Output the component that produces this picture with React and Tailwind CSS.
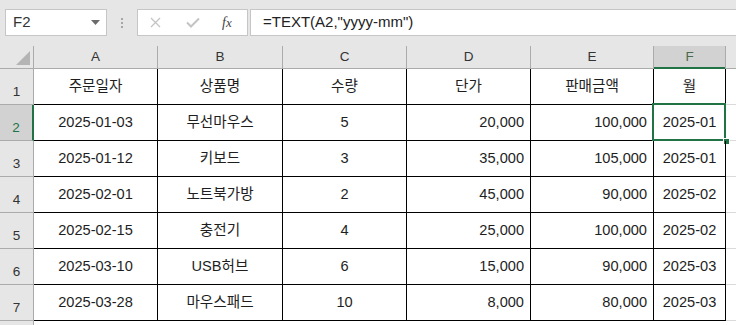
import React from "react";

const FONT = { fontFamily: '"Liberation Sans", "Noto Sans CJK KR", Arial, sans-serif' };

const cols = [
  { key: "A", w: "w-[124px]" },
  { key: "B", w: "w-[125px]" },
  { key: "C", w: "w-[124px]" },
  { key: "D", w: "w-[124px]" },
  { key: "E", w: "w-[123px]" },
  { key: "F", w: "w-[72px]" },
];

const rows = [
  ["주문일자", "상품명", "수량", "단가", "판매금액", "월"],
  ["2025-01-03", "무선마우스", "5", "20,000", "100,000", "2025-01"],
  ["2025-01-12", "키보드", "3", "35,000", "105,000", "2025-01"],
  ["2025-02-01", "노트북가방", "2", "45,000", "90,000", "2025-02"],
  ["2025-02-15", "충전기", "4", "25,000", "100,000", "2025-02"],
  ["2025-03-10", "USB허브", "6", "15,000", "90,000", "2025-03"],
  ["2025-03-28", "마우스패드", "10", "8,000", "80,000", "2025-03"],
];

function Cell({ w, children, align, selected }) {
  const a =
    align === "right" ? "justify-end pr-[6px]" : "justify-center";
  return (
    <div
      className={`relative ${w} h-[36px] shrink-0 border-r border-b border-black flex items-center ${a} text-[14.6px] text-[#1e1e1e]`}
    >
      {children}
      {selected && (
        <>
          <div className="absolute -left-[2px] -top-[2px] -right-[1px] -bottom-[1px] border-2 border-[#217346] pointer-events-none" />
          <div className="absolute -right-[4px] -bottom-[4px] w-[5px] h-[5px] bg-[#217346] outline outline-1 outline-white" />
        </>
      )}
    </div>
  );
}

export default function App() {
  return (
    <div className="w-[736px] h-[325px] overflow-hidden bg-white" style={FONT}>
      {/* Formula bar area */}
      <div className="h-[46px] bg-[#e6e6e6] flex items-start pt-[9px]">
        <div className="ml-[5px] w-[102px] h-[27px] bg-white border border-[#c6c6c6] flex items-center justify-between pl-[7px] pr-[6px]">
          <span className="text-[15px] text-[#333]">F2</span>
          <svg width="9" height="5" viewBox="0 0 9 5">
            <path d="M0 0 L9 0 L4.5 5 Z" fill="#6b6b6b" />
          </svg>
        </div>
        <div className="w-[30px] h-[27px] flex flex-col items-center justify-center gap-[2px]">
          <div className="w-[2px] h-[2px] bg-[#a6a6a6]" />
          <div className="w-[2px] h-[2px] bg-[#a6a6a6]" />
          <div className="w-[2px] h-[2px] bg-[#a6a6a6]" />
        </div>
        <div className="w-[111px] h-[27px] bg-white border border-[#c6c6c6] flex items-center">
          <svg className="ml-[12px]" width="11" height="11" viewBox="0 0 11 11">
            <path d="M1 1 L10 10 M10 1 L1 10" stroke="#c4c4c4" strokeWidth="1.3" />
          </svg>
          <svg className="ml-[25px]" width="14" height="11" viewBox="0 0 14 11">
            <path d="M1 5.5 L5 9.5 L13 1.5" stroke="#c4c4c4" strokeWidth="2" fill="none" />
          </svg>
          <span
            className="ml-[22px] text-[13px] italic text-[#444]"
            style={{ fontFamily: '"Liberation Serif", serif' }}
          >
            <span className="text-[14px]">f</span>x
          </span>
        </div>
        <div className="ml-[2px] flex-1 h-[27px] bg-white border border-[#c6c6c6] border-r-0 flex items-center pl-[12px]">
          <span className="text-[15px] text-[#222]">=TEXT(A2,"yyyy-mm")</span>
        </div>
      </div>

      {/* Column headers */}
      <div className="flex h-[23px] bg-[#e6e6e6] border-b border-[#ababab]">
        <div className="w-[34px] shrink-0 border-r border-[#ababab] relative">
          <svg className="absolute right-[3px] bottom-[3px]" width="14" height="14" viewBox="0 0 14 14">
            <path d="M14 0 L14 14 L0 14 Z" fill="#b4b4b4" />
          </svg>
        </div>
        {cols.map((c) => (
          <div
            key={c.key}
            className={`${c.w} shrink-0 border-r border-[#ababab] flex items-center justify-center text-[13.5px] relative ${
              c.key === "F" ? "bg-[#d2d2d2] text-[#4a6a4a]" : "text-[#333]"
            }`}
          >
            {c.key}
            {c.key === "F" && (
              <div className="absolute left-0 right-0 -bottom-[1px] h-[2px] bg-[#217346]" />
            )}
          </div>
        ))}
        <div className="flex-1" />
      </div>

      {/* Rows */}
      {rows.map((r, i) => (
        <div key={i} className="flex">
          <div
            className={`w-[34px] h-[36px] shrink-0 border-b border-[#ababab] flex items-end justify-center pb-[2px] text-[13.5px] ${
              i === 1
                ? "bg-[#d2d2d2] text-[#217346] border-r-2 border-r-[#217346]"
                : "bg-[#e6e6e6] text-[#333] border-r border-r-[#ababab]"
            }`}
          >
            {i + 1}
          </div>
          {cols.map((c, j) => (
            <Cell
              key={c.key}
              w={c.w}
              align={i > 0 && (j === 3 || j === 4) ? "right" : "center"}
              selected={i === 1 && j === 5}
            >
              {r[j]}
            </Cell>
          ))}
          <div className="flex-1 h-[36px] border-b border-[#dadada]" />
        </div>
      ))}
      <div className="flex">
        <div className="w-[34px] h-[20px] shrink-0 bg-[#e6e6e6] border-r border-[#ababab]" />
        <div className="flex-1" />
      </div>
    </div>
  );
}
